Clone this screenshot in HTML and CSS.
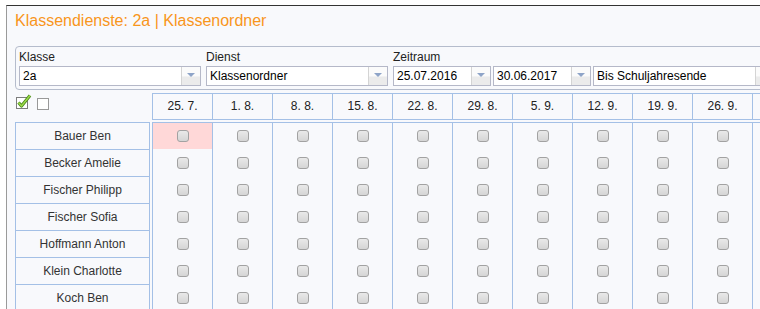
FILE: index.html
```html
<!DOCTYPE html>
<html lang="de">
<head>
  <meta charset="UTF-8">
  <title>Klassendienste</title>
  <link rel="stylesheet" href="styles.css">
</head>
<body>
  <div class="panel">
    <h1 class="title">Klassendienste: 2a | Klassenordner</h1>

    <div class="filters">
      <div class="field w-class">
        <label>Klasse</label>
        <div class="combo"><span>2a</span><i class="trig"></i></div>
      </div>
      <div class="field w-duty">
        <label>Dienst</label>
        <div class="combo"><span>Klassenordner</span><i class="trig"></i></div>
      </div>
      <div class="field">
        <label>Zeitraum</label>
        <div class="range">
          <div class="combo w-date"><span>25.07.2016</span><i class="trig"></i></div>
          <div class="combo w-date"><span>30.06.2017</span><i class="trig"></i></div>
          <div class="combo w-until"><span>Bis Schuljahresende</span><i class="trig"></i></div>
        </div>
      </div>
    </div>

    <div class="grid">
      <div class="tools">
        <svg class="check-all" width="18" height="16" viewBox="0 0 18 16">
          <rect x="0.5" y="3.5" width="11" height="11" fill="#fff" stroke="#7d7d7d"/>
          <path d="M2.5 8.5 L5.5 12 L14 1.5" fill="none" stroke="#4b8a1c" stroke-width="3.2" stroke-linejoin="round"/>
          <path d="M2.5 8.5 L5.5 12 L14 1.5" fill="none" stroke="#9edc4a" stroke-width="1.4" stroke-linejoin="round"/>
        </svg>
        <span class="uncheck-all"></span>
      </div>

      <div class="head">
        <div class="hcell">25. 7.</div>
        <div class="hcell">1. 8.</div>
        <div class="hcell">8. 8.</div>
        <div class="hcell">15. 8.</div>
        <div class="hcell">22. 8.</div>
        <div class="hcell">29. 8.</div>
        <div class="hcell">5. 9.</div>
        <div class="hcell">12. 9.</div>
        <div class="hcell">19. 9.</div>
        <div class="hcell">26. 9.</div>
        <div class="hcell"></div>
      </div>

      <div class="names">
        <div class="name">Bauer Ben</div>
        <div class="name">Becker Amelie</div>
        <div class="name">Fischer Philipp</div>
        <div class="name">Fischer Sofia</div>
        <div class="name">Hoffmann Anton</div>
        <div class="name">Klein Charlotte</div>
        <div class="name">Koch Ben</div>
      </div>

      <div class="body">
        <div class="row">
          <div class="cell today"><i class="cb"></i></div><div class="cell"><i class="cb"></i></div><div class="cell"><i class="cb"></i></div><div class="cell"><i class="cb"></i></div><div class="cell"><i class="cb"></i></div><div class="cell"><i class="cb"></i></div><div class="cell"><i class="cb"></i></div><div class="cell"><i class="cb"></i></div><div class="cell"><i class="cb"></i></div><div class="cell"><i class="cb"></i></div><div class="cell"><i class="cb"></i></div>
        </div>
        <div class="row">
          <div class="cell"><i class="cb"></i></div><div class="cell"><i class="cb"></i></div><div class="cell"><i class="cb"></i></div><div class="cell"><i class="cb"></i></div><div class="cell"><i class="cb"></i></div><div class="cell"><i class="cb"></i></div><div class="cell"><i class="cb"></i></div><div class="cell"><i class="cb"></i></div><div class="cell"><i class="cb"></i></div><div class="cell"><i class="cb"></i></div><div class="cell"><i class="cb"></i></div>
        </div>
        <div class="row">
          <div class="cell"><i class="cb"></i></div><div class="cell"><i class="cb"></i></div><div class="cell"><i class="cb"></i></div><div class="cell"><i class="cb"></i></div><div class="cell"><i class="cb"></i></div><div class="cell"><i class="cb"></i></div><div class="cell"><i class="cb"></i></div><div class="cell"><i class="cb"></i></div><div class="cell"><i class="cb"></i></div><div class="cell"><i class="cb"></i></div><div class="cell"><i class="cb"></i></div>
        </div>
        <div class="row">
          <div class="cell"><i class="cb"></i></div><div class="cell"><i class="cb"></i></div><div class="cell"><i class="cb"></i></div><div class="cell"><i class="cb"></i></div><div class="cell"><i class="cb"></i></div><div class="cell"><i class="cb"></i></div><div class="cell"><i class="cb"></i></div><div class="cell"><i class="cb"></i></div><div class="cell"><i class="cb"></i></div><div class="cell"><i class="cb"></i></div><div class="cell"><i class="cb"></i></div>
        </div>
        <div class="row">
          <div class="cell"><i class="cb"></i></div><div class="cell"><i class="cb"></i></div><div class="cell"><i class="cb"></i></div><div class="cell"><i class="cb"></i></div><div class="cell"><i class="cb"></i></div><div class="cell"><i class="cb"></i></div><div class="cell"><i class="cb"></i></div><div class="cell"><i class="cb"></i></div><div class="cell"><i class="cb"></i></div><div class="cell"><i class="cb"></i></div><div class="cell"><i class="cb"></i></div>
        </div>
        <div class="row">
          <div class="cell"><i class="cb"></i></div><div class="cell"><i class="cb"></i></div><div class="cell"><i class="cb"></i></div><div class="cell"><i class="cb"></i></div><div class="cell"><i class="cb"></i></div><div class="cell"><i class="cb"></i></div><div class="cell"><i class="cb"></i></div><div class="cell"><i class="cb"></i></div><div class="cell"><i class="cb"></i></div><div class="cell"><i class="cb"></i></div><div class="cell"><i class="cb"></i></div>
        </div>
        <div class="row">
          <div class="cell"><i class="cb"></i></div><div class="cell"><i class="cb"></i></div><div class="cell"><i class="cb"></i></div><div class="cell"><i class="cb"></i></div><div class="cell"><i class="cb"></i></div><div class="cell"><i class="cb"></i></div><div class="cell"><i class="cb"></i></div><div class="cell"><i class="cb"></i></div><div class="cell"><i class="cb"></i></div><div class="cell"><i class="cb"></i></div><div class="cell"><i class="cb"></i></div>
        </div>
      </div>
    </div>
  </div>
</body>
</html>
```

FILE: styles.css
```css
body {
  margin: 0;
  overflow: hidden;
  background-color: #ffffff;
  font-family: "Liberation Sans", Arial, sans-serif;
  font-size: 12px;
  color: #333;
}

.panel {
  width: 1000px;
  height: 400px;
  margin: 5px 0 0 6px;
  padding-left: 8px;
  border-top: 1px solid #333;
  border-left: 1px solid #9a9a9a;
  background-color: #f8f9fc;
}

.title {
  margin: 5px 0 0;
  font-size: 16px;
  line-height: 19px;
  font-weight: normal;
  color: #f8961c;
}

.filters {
  display: flex;
  gap: 5px;
  width: 900px;
  margin-top: 16px;
  padding: 3px;
  border: 1px solid #b5bccc;
  border-radius: 4px;
}

.field {
  display: flex;
  flex-direction: column;
}

.field label {
  line-height: 14px;
  margin-bottom: 2px;
  color: #222;
}

.w-class,
.w-duty {
  width: 182px;
}

.range {
  display: flex;
  gap: 2px;
}

.combo {
  display: flex;
  height: 20px;
  box-sizing: border-box;
  border: 1px solid #b5b8c8;
  background-color: #fff;
}

.combo span {
  flex: 1;
  padding-left: 3px;
  line-height: 18px;
  color: #000;
  white-space: nowrap;
}

.w-date {
  width: 98px;
}

.w-until {
  width: 182px;
}

.trig {
  position: relative;
  width: 18px;
  border-left: 1px solid #d4d4d4;
  background: linear-gradient(#fbfbfb 0, #fbfbfb 50%, #ebebeb 55%, #ebebeb 100%);
}

.trig::after {
  content: "";
  position: absolute;
  left: 5px;
  top: 6px;
  border-left: 4px solid transparent;
  border-right: 4px solid transparent;
  border-top: 4px solid #8ea4c8;
}

.grid {
  display: grid;
  grid-template-columns: 135px max-content;
  gap: 2px;
  margin-top: 3px;
}

.tools {
  display: flex;
  align-items: flex-start;
  gap: 3px;
  padding: 1px 0 0 1px;
}

.uncheck-all {
  width: 12px;
  height: 12px;
  margin-top: 4px;
  box-sizing: border-box;
  border: 1px solid #999;
  background-color: #fff;
}

.head {
  display: flex;
  border-top: 1px solid #a4c0e6;
  border-bottom: 1px solid #a4c0e6;
}

.hcell {
  width: 60px;
  height: 25px;
  box-sizing: border-box;
  border-left: 1px solid #a4c0e6;
  line-height: 25px;
  text-align: center;
  color: #222;
}

.names {
  border-left: 1px solid #a4c0e6;
  border-right: 1px solid #a4c0e6;
}

.name {
  height: 26px;
  border-top: 1px solid #a4c0e6;
  line-height: 26px;
  text-align: center;
  white-space: nowrap;
}

.body {
  border-top: 1px solid #a4c0e6;
}

.row {
  display: flex;
}

.cell {
  display: flex;
  align-items: center;
  justify-content: center;
  width: 60px;
  height: 26px;
  box-sizing: border-box;
  border-left: 1px solid #a4c0e6;
}

.row + .row .cell {
  height: 27px;
  padding-top: 1px;
}

.cell.today {
  background-color: #ffd8d8;
}

.cb {
  width: 12px;
  height: 12px;
  box-sizing: border-box;
  border: 1px solid #a2a2a2;
  border-radius: 3px;
  background: linear-gradient(#e9e9e9, #d5d5d5);
}
```
